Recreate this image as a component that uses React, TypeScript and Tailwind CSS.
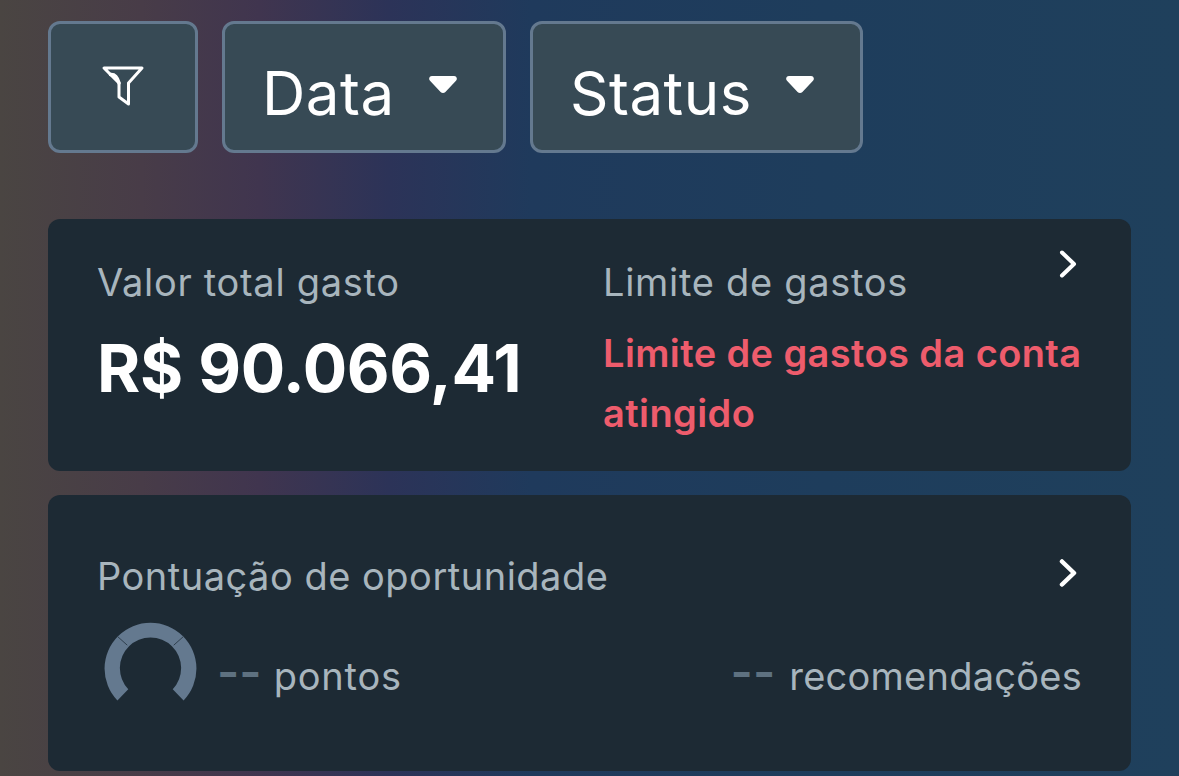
const FONT = "font-['Inter','Noto_Sans',sans-serif]";

function FilterIcon() {
  return (
    <svg width="44" height="44" viewBox="0 0 44 44" fill="none" stroke="white" strokeWidth="3" strokeLinejoin="round" strokeLinecap="round">
      <path d="M3 5h38L27.500 20v21l-9.500-7V20z" />
      <path d="M9.500 11.500c4.500-.5 7 3 8.500 8.500" strokeWidth="3.500" />
    </svg>
  );
}

function Caret() {
  return (
    <svg width="28" height="18" viewBox="0 0 28 18" fill="white">
      <path d="M3 0h22c2.600 0 3.800 3 2 4.800L16.400 16c-1.300 1.400-3.500 1.400-4.800 0L1 4.800C-.8 3 .4 0 3 0z" />
    </svg>
  );
}

function Chevron({ w = 4 }: { w?: number }) {
  return (
    <svg width="18" height="28" viewBox="0 0 18 28" fill="none" stroke="white" strokeWidth={w} strokeLinecap="round" strokeLinejoin="round">
      <path d="M3 2.500L15 14 3 25.500" />
    </svg>
  );
}

function Gauge() {
  return (
    <svg width="93" height="81" viewBox="0 0 94 82" fill="none">
      <path d="M13.500 79.500A46.500 46.500 0 1 1 80.500 79.500L69.500 68A31 31 0 1 0 24.500 68z" fill="#64798f" />
      <path d="M14 15l9.500 8.500M80 15l-9.500 8.500" stroke="#2f3f4d" strokeWidth="1" />
    </svg>
  );
}

function FilterButton({ label, width }: { label: string; width: string }) {
  return (
    <button className={`flex h-[132px] ${width} items-center rounded-xl border-[3px] border-[#64798f] bg-[#374a55] pl-[37px] text-[60px] leading-none text-white`}>
      <span className="mt-[12px] tracking-[0.5px]">{label}</span>
      <span className="mb-[4px] ml-[34px] flex"><Caret /></span>
    </button>
  );
}

export default function App() {
  return (
    <div className={`h-[776px] overflow-hidden bg-[linear-gradient(90deg,#4a4542_0%,#483c48_12%,#40354f_22%,#2c3358_33%,#1f3a5c_45%,#1e3d5c_70%,#1f405c_100%)] px-[48px] pt-[21px] ${FONT}`}>
      <div className="flex gap-[24px]">
        <button className="flex h-[132px] w-[150px] items-center justify-center rounded-xl border-[3px] border-[#64798f] bg-[#374a55] pb-[4px]">
          <FilterIcon />
        </button>
        <FilterButton label="Data" width="w-[284px]" />
        <FilterButton label="Status" width="w-[333px]" />
      </div>

      <div className="mt-[66px] flex h-[252px] rounded-xl bg-[#1d2a34] pl-[49px] pr-[49px] pt-[38px]">
        <div className="w-[506px]">
          <div className="text-[38px] leading-[50px] tracking-[0.7px] text-[#a8b5bd]">Valor total gasto</div>
          <div className="mt-[26px] text-[66px] font-bold leading-[70px] tracking-[-0.35px] text-white">R$ 90.066,41</div>
        </div>
        <div className="flex-1">
          <div className="flex items-start justify-between">
            <span className="text-[38px] leading-[50px] tracking-[0.7px] text-[#a8b5bd]">Limite de gastos</span>
            <span className="-mt-[7px] mr-[5px] flex"><Chevron /></span>
          </div>
          <div className="mt-[16px] text-[38px] font-semibold leading-[60px] tracking-[0.4px] text-[#ee5c6c]">
            Limite de gastos da conta atingido
          </div>
        </div>
      </div>

      <div className="mt-[24px] h-[276px] rounded-xl bg-[#1d2a34] pl-[49px] pr-[49px] pt-[56px]">
        <div className="flex items-center justify-between">
          <span className="text-[38px] leading-[50px] tracking-[0.5px] text-[#a8b5bd]">Pontuação de oportunidade</span>
          <span className="mb-[6px] mr-[5px] flex"><Chevron w={4.5} /></span>
        </div>
        <div className="-mt-[1px] flex items-center justify-between pt-[22px]">
          <div className="flex items-center">
            <span className="ml-[7px] flex"><Gauge /></span>
            <span className="ml-[20px] mt-[18px] text-[48px] font-semibold leading-[50px] text-[#5e7180]">--</span>
            <span className="ml-[12px] mt-[26px] text-[38px] leading-[50px] tracking-[0.8px] text-[#a8b5bd]">pontos</span>
          </div>
          <div className="flex items-center">
            <span className="mt-[18px] text-[48px] font-semibold leading-[50px] text-[#5e7180]">--</span>
            <span className="ml-[14px] mt-[26px] text-[38px] leading-[50px] tracking-[0.25px] text-[#a8b5bd]">recomendações</span>
          </div>
        </div>
      </div>
    </div>
  );
}
